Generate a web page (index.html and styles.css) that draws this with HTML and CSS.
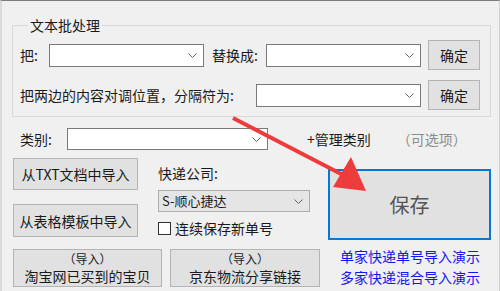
FILE: index.html
```html
<!DOCTYPE html>
<html lang="zh-CN">
<head>
  <meta charset="UTF-8" />
  <title>文本批处理</title>
  <link rel="stylesheet" href="styles.css">
</head>
<body>
  <div class="window">
    <fieldset class="group">
      <legend>文本批处理</legend>
      <div class="row">
        <span class="label lbl-ba">把:</span>
        <div class="combo combo-a"><svg class="chev" width="9" height="5" viewBox="0 0 9 5"><polyline points="0.5,0.5 4.5,4.5 8.5,0.5"/></svg></div>
        <span class="label lbl-rep">替换成:</span>
        <div class="combo combo-a"><svg class="chev" width="9" height="5" viewBox="0 0 9 5"><polyline points="0.5,0.5 4.5,4.5 8.5,0.5"/></svg></div>
        <button class="btn btn-ok">确定</button>
      </div>
      <div class="row">
        <span class="label lbl-swap">把两边的内容对调位置，分隔符为:</span>
        <div class="combo combo-b"><svg class="chev" width="9" height="5" viewBox="0 0 9 5"><polyline points="0.5,0.5 4.5,4.5 8.5,0.5"/></svg></div>
        <button class="btn btn-ok">确定</button>
      </div>
    </fieldset>

    <div class="cat-row">
      <span class="label lbl-cat">类别:</span>
      <div class="combo combo-cat"><svg class="chev" width="9" height="5" viewBox="0 0 9 5"><polyline points="0.5,0.5 4.5,4.5 8.5,0.5"/></svg></div>
      <span class="manage">+管理类别</span>
      <span class="optional">（可选项）</span>
    </div>

    <div class="lower">
      <div class="left">
        <div class="cols">
          <div class="col-import">
            <button class="btn btn-imp">从TXT文档中导入</button>
            <button class="btn btn-imp">从表格模板中导入</button>
          </div>
          <div class="col-express">
            <div class="exp-label">快递公司:</div>
            <div class="combo combo-ro">S-顺心捷达<svg class="chev" width="9" height="5" viewBox="0 0 9 5"><polyline points="0.5,0.5 4.5,4.5 8.5,0.5"/></svg></div>
            <label class="check"><span class="box"></span>连续保存新单号</label>
          </div>
        </div>
        <div class="bottom-btns">
          <button class="btn btn-two"><span class="l1">（导入）</span><span class="l2">淘宝网已买到的宝贝</span></button>
          <button class="btn btn-two btn-jd"><span class="l1">（导入）</span><span class="l2">京东物流分享链接</span></button>
        </div>
      </div>
      <div class="right">
        <button class="btn btn-save">保存</button>
        <a class="demo" href="#">单家快递单号导入演示</a>
        <a class="demo" href="#">多家快递混合导入演示</a>
      </div>
    </div>

    <svg class="arrow" width="500" height="291" viewBox="0 0 500 291">
      <line x1="233" y1="118" x2="345" y2="176" />
      <polygon points="366,191 333,187 351,157" />
    </svg>
  </div>
</body>
</html>
```

FILE: styles.css
```css
* { box-sizing: border-box; margin: 0; padding: 0; }
body {
  font-family: "Noto Sans CJK SC", "Liberation Sans", sans-serif;
  font-size: 14px;
  color: #1a1a1a;
  background: #f0f0f0;
}
.window {
  position: relative;
  width: 500px; height: 291px;
  background: #f0f0f0;
  border-top: 1px solid #7c7c7c;
  border-left: 2px solid #dadada;
  border-right: 1px solid #d0d0d0;
  overflow: hidden;
}

/* group box */
.group {
  margin: 14px 8px 0 10px;
  border: 1px solid #d9d9d9;
  padding: 5px 9px 6px 7px;
}
.group legend {
  margin-left: 8px;
  padding: 0 2px;
  line-height: 20px;
}
.row { display: flex; align-items: center; height: 30px; }
.row + .row { margin-top: 10px; }
.label { white-space: nowrap; line-height: 20px; }
.lbl-ba { width: 29px; }
.lbl-rep { width: 54px; margin-left: 8px; }
.lbl-swap { width: 236px; }

.combo {
  position: relative;
  height: 23px;
  background: #fff;
  border: 1px solid #7a7a7a;
}
.chev {
  position: absolute; right: 6px; top: 8px;
  fill: none; stroke: #606060; stroke-width: 1;
}
.combo-a { width: 155px; }
.combo-b { width: 165px; }

.btn {
  font-family: inherit;
  font-size: 14px;
  color: #1a1a1a;
  background: #e1e1e1;
  border: 1px solid #b4b4b4;
  cursor: pointer;
}
.btn-ok { width: 52px; height: 30px; margin-left: 7px; }

/* category row */
.cat-row { display: flex; align-items: center; height: 22px; margin: 11px 0 0 18px; }
.lbl-cat { width: 47px; }
.combo-cat { width: 201px; height: 22px; }
.manage { margin-left: 39px; }
.optional { margin-left: 26px; color: #8c8c8c; }

/* lower section */
.lower { display: flex; margin: 8px 0 0 11px; }
.left { width: 307px; }
.cols { display: flex; }
.col-import { display: flex; flex-direction: column; width: 125px; }
.btn-imp { height: 32px; }
.btn-imp + .btn-imp { margin-top: 14px; height: 33px; }
.col-express { margin-left: 20px; width: 152px; }
.exp-label { line-height: 20px; margin-top: 5px; }
.combo-ro {
  margin-top: 7px;
  height: 22px;
  background: #e5e5e5;
  border-color: #adadad;
  padding-left: 3px;
  line-height: 20px;
  font-size: 13px;
}
.check { display: flex; align-items: center; margin-top: 6px; line-height: 20px; }
.box {
  width: 13px; height: 13px;
  background: #fff;
  border: 1px solid #333;
  margin-right: 4px;
}
.bottom-btns { display: flex; margin-top: 11px; }
.btn-two {
  display: flex; flex-direction: column; align-items: center; justify-content: center;
  width: 149px; height: 38px;
}
.btn-two .l1 { line-height: 17px; font-size: 12px; }
.btn-two .l2 { line-height: 19px; }
.btn-jd { width: 150px; margin-left: 8px; }

.right { display: flex; flex-direction: column; margin: 11px 0 0 8px; }
.btn-save {
  width: 163px; height: 71px;
  border: 2px solid #0078d7;
  background: #e1e1e1;
  font-size: 20px;
  color: #555;
}
.demo {
  margin: 6px 0 0 12px;
  line-height: 21px;
  color: #1515ee;
  text-decoration: none;
}
.demo + .demo { margin-top: 0; }

/* annotation arrow */
.arrow { position: absolute; left: -2px; top: -1px; pointer-events: none; }
.arrow line { stroke: #ee3b3b; stroke-width: 4; }
.arrow polygon { fill: #ee3b3b; }
```
